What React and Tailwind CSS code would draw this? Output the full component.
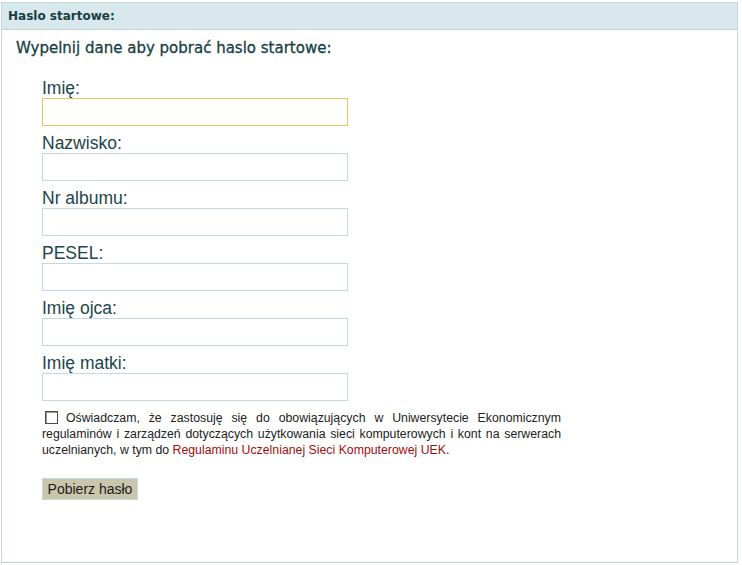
import { useState } from "react";

const fields = [
  { name: "imie", label: "Imię:" },
  { name: "nazwisko", label: "Nazwisko:" },
  { name: "album", label: "Nr albumu:" },
  { name: "pesel", label: "PESEL:" },
  { name: "ojciec", label: "Imię ojca:" },
  { name: "matka", label: "Imię matki:" },
];

const App = () => {
  const [values, setValues] = useState({});
  const [agree, setAgree] = useState(false);

  return (
    <div className="bg-white w-[742px] h-[565px] pt-[2px] pl-px">
      <div className="w-[737px] h-[561px] border border-[#c6dade] border-b-[#b3d3cf] bg-white">
        <div className="h-[27px] bg-[#d9e8ec] border-b border-[#bfd3d8] pl-[6px] flex items-center font-['DejaVu_Sans',sans-serif] font-bold text-[12px] text-[#1b3c42]">
          Haslo startowe:
        </div>
        <div className="pl-[14px] pt-[9px] font-['DejaVu_Sans',sans-serif] text-[15px] leading-[18px] text-[#173f45] [-webkit-text-stroke:0.3px_#173f45]">
          Wypelnij dane aby pobrać haslo startowe:
        </div>
        <form className="pl-[40px] pt-[22px]" onSubmit={(e) => e.preventDefault()}>
          <div className="flex flex-col gap-[8px]">
            {fields.map((f, i) => (
              <div key={f.name} className="flex flex-col">
                <label
                  htmlFor={f.name}
                  className="font-['Liberation_Sans',Arial,sans-serif] text-[17.5px] leading-[19px] text-[#1d454b]"
                >
                  {f.label}
                </label>
                <input
                  id={f.name}
                  value={values[f.name] || ""}
                  onChange={(e) => setValues({ ...values, [f.name]: e.target.value })}
                  className={`w-[306px] h-[28px] bg-white border outline-none px-1 text-[14px] ${
                    i === 0 ? "border-[#e2c85c]" : "border-[#c5dadf]"
                  }`}
                />
              </div>
            ))}
          </div>
          <p
            onClick={() => setAgree(!agree)}
            className="w-[519px] mt-[9px] text-justify font-['Liberation_Sans',Arial,sans-serif] text-[12.3px] leading-[16px] text-[#222] cursor-default"
          >
            <span className="inline-block align-[-2px] ml-[3px] mr-[8px] w-[13px] h-[13px] border border-[#4a4a4a] bg-white shadow-[inset_1px_1px_0_#9a9a9a]">
              {agree ? "✓" : ""}
            </span>
            Oświadczam, że zastosuję się do obowiązujących w Uniwersytecie Ekonomicznym regulaminów i
            zarządzeń dotyczących użytkowania sieci komputerowych i kont na serwerach uczelnianych, w tym
            do <span className="text-[#a30d0d]">Regulaminu Uczelnianej Sieci Komputerowej UEK</span>.
          </p>
          <button
            type="submit"
            className="mt-[20px] w-[96px] h-[22px] bg-[#cac6ac] border border-[#c3dbe0] font-['Liberation_Sans',Arial,sans-serif] text-[14px] leading-[20px] text-[#1a1a1a]"
          >
            Pobierz hasło
          </button>
        </form>
      </div>
    </div>
  );
};

export default App;
